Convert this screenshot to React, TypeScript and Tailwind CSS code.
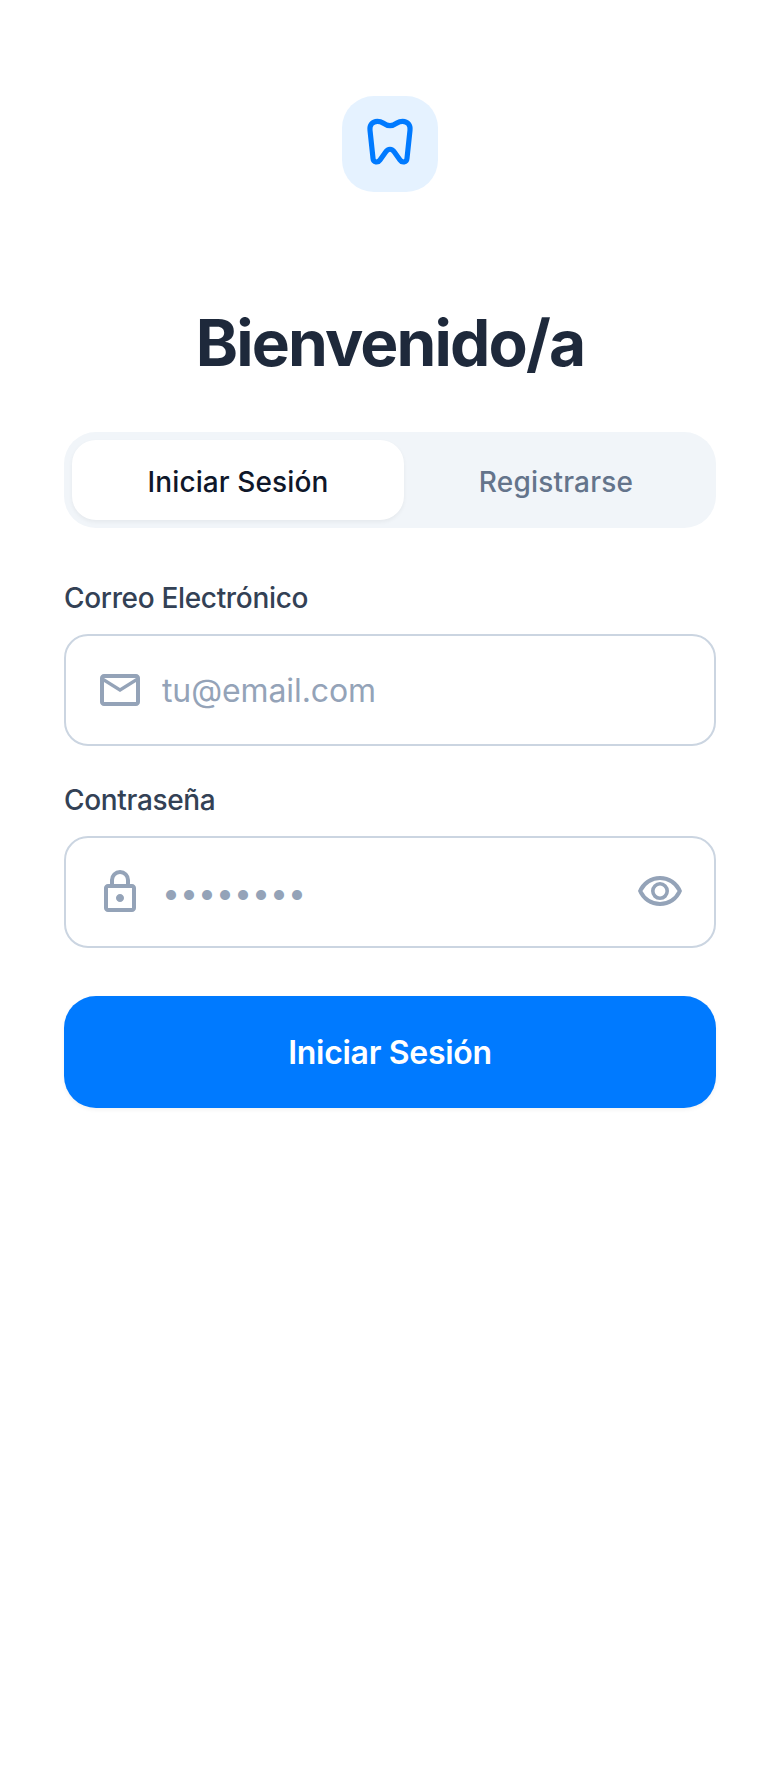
import { useState } from "react";

function ToothIcon() {
  return (
    <svg className="size-24" viewBox="36 36 288 288" fill="none" stroke="currentColor" strokeWidth="15.5" strokeLinejoin="round" aria-hidden="true">
      <path d="M180 125C172 125 165 121 159 117C153 113 149 112 142 112C127 112 118 124 120 139L129 223C130 236 144 237 150 228L167 204C174 193 186 193 193 204L210 228C216 237 230 236 231 223L240 139C242 124 233 112 218 112C211 112 207 113 201 117C195 121 188 125 180 125Z" />
    </svg>
  );
}

function Icon({ d }: { d: string }) {
  return (
    <svg className="size-12 shrink-0 text-[#94a3b8]" viewBox="0 0 24 24" fill="currentColor" aria-hidden="true">
      <path d={d} />
    </svg>
  );
}

const MAIL =
  "M4 20q-.825 0-1.412-.587T2 18V6q0-.825.587-1.412T4 4h16q.825 0 1.413.588T22 6v12q0 .825-.587 1.413T20 20zm8-7L4 8v10h16V8zm0-2 8-5H4zM4 8V6v12z";
const LOCK =
  "M6 22q-.825 0-1.412-.587T4 20V10q0-.825.588-1.412T6 8h1V6q0-2.075 1.463-3.537T12 1t3.538 1.463T17 6v2h1q.825 0 1.413.588T20 10v10q0 .825-.587 1.413T18 22zm0-2h12V10H6zm6-3q.825 0 1.413-.587T14 15t-.587-1.412T12 13t-1.412.588T10 15t.588 1.413T12 17M9 8h6V6q0-1.25-.875-2.125T12 3t-2.125.875T9 6zM6 20V10z";
const EYE =
  "M12 16q1.875 0 3.188-1.312T16.5 11.5t-1.312-3.187T12 7 8.813 8.313 7.5 11.5t1.313 3.188T12 16m0-1.8q-1.125 0-1.912-.787T9.3 11.5t.788-1.912T12 8.8t1.913.788.787 1.912-.787 1.913T12 14.2m0 4.8q-3.65 0-6.65-2.037T1 11.5q1.35-3.425 4.35-5.462T12 4t6.65 2.038T23 11.5q-1.35 3.425-4.35 5.463T12 19m0-2q2.825 0 5.188-1.487T20.8 11.5q-1.25-2.525-3.612-4.012T12 6 6.813 7.488 3.2 11.5q1.25 2.525 3.613 4.013T12 17";

const labelClass = "text-[28px] leading-[42px] font-medium tracking-[-0.33px] text-[#334155]";
const fieldClass = "mt-[15px] flex h-28 items-center gap-[18px] rounded-3xl border-2 border-[#cbd5e1] px-[30px]";
const inputClass =
  "min-w-0 flex-1 bg-transparent pt-0.5 text-[32px] leading-[48px] text-[#0f172a] outline-none placeholder:text-[#94a3b8] placeholder:opacity-100";

export default function App() {
  const [visible, setVisible] = useState(false);

  return (
    <main className="flex min-h-[1768px] w-full flex-col items-center bg-white px-16 pt-24 font-['Inter',sans-serif]">
      <div className="flex size-24 items-center justify-center rounded-[32px] bg-[#e5f2ff] text-[#007aff]">
        <ToothIcon />
      </div>

      <h1 className="mt-[111px] text-[64px] leading-[80px] font-bold tracking-[-1.85px] text-[#1e293b]">Bienvenido/a</h1>

      <div className="mt-[49px] flex h-24 w-full rounded-[32px] bg-[#f1f5f9] p-2 text-[28px] leading-[40px] font-medium">
        <button className="flex-[332] rounded-3xl bg-white pt-1 tracking-[0.1px] text-[#0f172a] shadow-[0_2px_4px_rgba(0,0,0,0.05)]">Iniciar Sesión</button>
        <button className="flex-[304] pt-1 tracking-[0.2px] text-[#64748b]">Registrarse</button>
      </div>

      <form className="mt-[49px] flex w-full flex-col" onSubmit={(e) => e.preventDefault()}>
        <label htmlFor="email" className={labelClass}>Correo Electrónico</label>
        <div className={fieldClass}>
          <Icon d={MAIL} />
          <input id="email" type="email" placeholder="tu@email.com" className={`${inputClass} tracking-[-0.1px]`} />
        </div>

        <label htmlFor="password" className={`mt-[33px] ${labelClass}`}>Contraseña</label>
        <div className={fieldClass}>
          <Icon d={LOCK} />
          <input id="password" type={visible ? "text" : "password"} placeholder="••••••••" className={inputClass} />
          <button type="button" aria-label="Mostrar contraseña" onClick={() => setVisible(!visible)}>
            <Icon d={EYE} />
          </button>
        </div>

        <button type="submit" className="mt-12 h-28 rounded-[32px] bg-[#007aff] pt-0.5 text-[32px] leading-[48px] font-semibold tracking-[-0.3px] text-white shadow-[0_2px_4px_rgba(0,0,0,0.05)]">
          Iniciar Sesión
        </button>
      </form>
    </main>
  );
}
